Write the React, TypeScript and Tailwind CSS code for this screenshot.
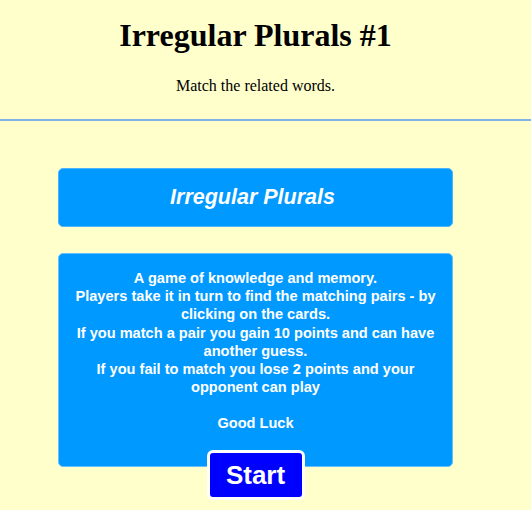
export default function App() {
    const lines = [
        'A game of knowledge and memory.',
        'Players take it in turn to find the matching pairs - by clicking on the cards.',
        'If you match a pair you gain 10 points and can have another guess.',
        'If you fail to match you lose 2 points and your opponent can play',
    ];

    return (
        <div className="min-h-[510px] bg-[#ffffcc] text-black">
            {/* Header */}
            <div className="h-[121px] border-b-2 border-[#80b3e6]">
                <div className="w-[511px] text-center font-['Liberation_Serif',serif]">
                    <h1 className="pt-[17px] text-[32px] font-bold leading-[37px]">Irregular Plurals #1</h1>
                    <p className="mt-[23px] text-[16px] leading-[18px]">Match the related words.</p>
                </div>
            </div>

            {/* Intro */}
            <div className="flex w-[511px] flex-col items-center pt-[47px] font-['Liberation_Sans',Arial,sans-serif] text-white">
                <div className="flex h-[59px] w-[395px] items-center justify-center rounded-[5px] border border-[#4db3ff] bg-[#0099ff]">
                    <h2 className="pr-[6px] text-[21.5px] font-bold italic">Irregular Plurals</h2>
                </div>

                <div className="mt-[26px] h-[214px] w-[395px] rounded-[5px] border border-[#66c0ff] bg-[#0099ff] px-[12px] pt-[15px] text-center text-[14.6px] font-bold leading-[18.2px]">
                    {lines.map((l) => (
                        <p key={l}>{l}</p>
                    ))}
                    <p className="mt-[18px]">Good Luck</p>
                </div>

                <button className="relative -mt-[17px] h-[50px] w-[98px] rounded-[6px] border-[3px] border-white bg-[#0000ff] text-[26px] font-bold text-white">
                    Start
                </button>
            </div>
        </div>
    );
}
